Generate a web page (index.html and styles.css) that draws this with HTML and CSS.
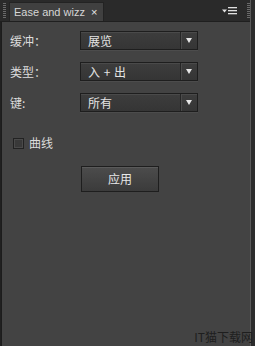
FILE: index.html
```html
<!DOCTYPE html>
<html lang="zh">
<head>
<meta charset="utf-8">
<link rel="stylesheet" href="styles.css">
</head>
<body>
<div class="frame">
  <div class="main">
    <div class="tabbar">
      <div class="grip"></div>
      <div class="tab">Ease and wizz <span class="close">×</span></div>
      <div class="spacer"></div>
      <svg class="menu" width="15" height="8" viewBox="0 0 15 8">
        <path d="M0 2.5h5l-2.5 3z" fill="#e0e0e0"/>
        <rect x="6" y="0" width="9" height="1.3" fill="#e0e0e0"/>
        <rect x="6" y="3" width="9" height="1.3" fill="#e0e0e0"/>
        <rect x="6" y="6" width="9" height="1.3" fill="#e0e0e0"/>
      </svg>
      <div class="grip grip-right"></div>
    </div>
    <div class="panel">
      <div class="rows">
        <div class="row">
          <span class="label">缓冲：</span>
          <div class="select"><span class="value">展览</span><span class="arrow"></span></div>
        </div>
        <div class="row">
          <span class="label">类型：</span>
          <div class="select"><span class="value">入 + 出</span><span class="arrow"></span></div>
        </div>
        <div class="row">
          <span class="label">键:</span>
          <div class="select"><span class="value">所有</span><span class="arrow"></span></div>
        </div>
      </div>
      <label class="check"><span class="box"></span><span>曲线</span></label>
      <div class="btn-row"><button class="btn">应用</button></div>
    </div>
  </div>
  <div class="edge"></div>
</div>
<div class="watermark">IT猫下载网</div>
</body>
</html>
```
FILE: styles.css
```css
html, body {
  margin: 0;
  padding: 0;
  background: #2f2f2f;
  font-family: "Noto Sans CJK SC", "Noto Sans", sans-serif;
}
.frame {
  display: flex;
  width: 255px;
  height: 346px;
  overflow: hidden;
}
.main {
  width: 250px;
  display: flex;
  flex-direction: column;
}
.edge {
  width: 5px;
  background: #2c2c2c;
  border-left: 1px solid #5a5a5a;
  box-sizing: border-box;
}
.tabbar {
  height: 22px;
  display: flex;
  align-items: flex-end;
  background: #2a2a2a;
  box-sizing: border-box;
  border-bottom: 1px solid #1f1f1f;
}
.grip {
  width: 3px;
  height: 16px;
  margin: 0 3px 2px 3px;
  background: repeating-linear-gradient(to bottom, #6a6a6a 0 1px, transparent 1px 2px);
  align-self: flex-end;
}
.grip-right {
  margin: 0 0 2px 10px;
}
.tab {
  height: 19px;
  box-sizing: border-box;
  padding: 2px 6px 0 4px;
  background: #404040;
  border: 1px solid #232323;
  border-bottom: none;
  color: #d6d6d6;
  font-family: "Liberation Sans", "DejaVu Sans", sans-serif;
  font-size: 11px;
  line-height: 15px;
  white-space: nowrap;
}
.close {
  margin-left: 3px;
  font-size: 11px;
  color: #e8e8e8;
}
.spacer { flex: 1; }
.menu {
  align-self: center;
  margin-top: 1px;
}
.panel {
  flex: 1;
  background: #434343;
  border-left: 1px solid #202020;
  box-shadow: inset 1px 0 0 #1c1c1c;
  padding: 9px 0 0 9px;
  display: flex;
  flex-direction: column;
}
.rows {
  display: flex;
  flex-direction: column;
  gap: 12px;
}
.row {
  display: flex;
  align-items: center;
  height: 19px;
}
.label {
  width: 70px;
  color: #dcdcdc;
  font-size: 12px;
  line-height: 19px;
}
.select {
  width: 118px;
  height: 19px;
  box-sizing: border-box;
  border: 1px solid #1e1e1e;
  background: linear-gradient(#3d3d3d, #353535);
  box-shadow: inset 0 1px 0 #4a4a4a, 0 1px 0 #4c4c4c;
  display: flex;
  align-items: center;
}
.value {
  flex: 1;
  padding-left: 7px;
  color: #e4e4e4;
  font-size: 12px;
  line-height: 17px;
  word-spacing: 1px;
}
.arrow {
  width: 17px;
  height: 17px;
  box-sizing: border-box;
  border-left: 1px solid #262626;
  box-shadow: inset 1px 0 0 #4b4b4b;
  display: flex;
  align-items: center;
  justify-content: center;
}
.arrow::after {
  content: "";
  border-left: 3.5px solid transparent;
  border-right: 3.5px solid transparent;
  border-top: 5px solid #e6e6e6;
}
.check {
  display: flex;
  align-items: center;
  gap: 5px;
  margin: 24px 0 0 3px;
  color: #dcdcdc;
  font-size: 12px;
  line-height: 14px;
}
.box {
  width: 11px;
  height: 11px;
  box-sizing: border-box;
  border: 1px solid #222;
  background: #393939;
  box-shadow: inset 0 0 0 1px #4a4a4a;
}
.btn-row {
  margin-top: 15px;
  padding-left: 71px;
}
.btn {
  width: 78px;
  height: 26px;
  box-sizing: border-box;
  border: 1px solid #1e1e1e;
  background: linear-gradient(#4c4c4c, #3b3b3b);
  box-shadow: inset 0 1px 0 #5a5a5a;
  color: #e8e8e8;
  font-family: "Noto Sans CJK SC", "Noto Sans", sans-serif;
  font-size: 12px;
  padding: 0;
}
.watermark {
  position: absolute;
  right: 2px;
  bottom: 1px;
  color: #1e1e1e;
  font-size: 12px;
  font-family: "Noto Sans CJK SC", sans-serif;
  letter-spacing: 0;
}
```
